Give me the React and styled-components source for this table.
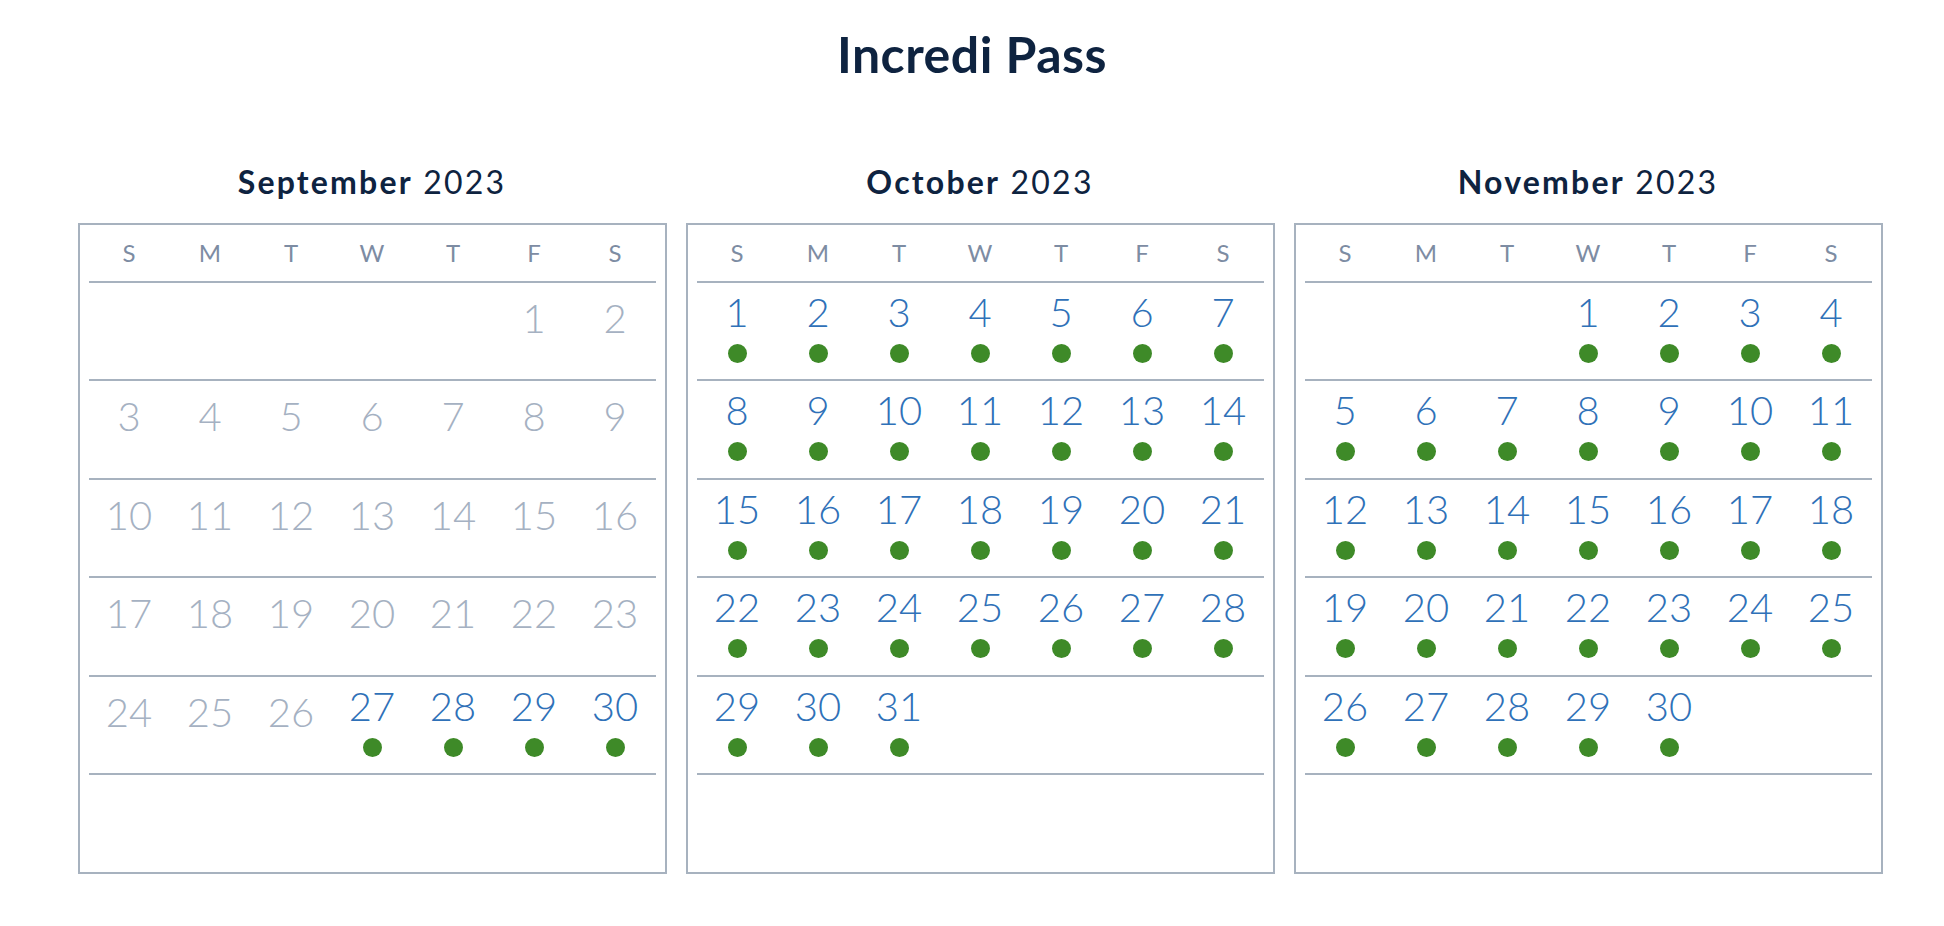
import React from "react";
import styled, { createGlobalStyle } from "styled-components";

const GlobalStyle = createGlobalStyle`
  body {
    margin: 0;
    background: #fff;
    font-family: "Lato", "Noto Sans", sans-serif;
  }
`;

const Page = styled.div`
  padding-top: 24px;
`;

const Title = styled.h1`
  margin: 0 0 79px;
  text-align: center;
  font-size: 50px;
  line-height: 60px;
  font-weight: 700;
  letter-spacing: 0.5px;
  color: #0e2340;
`;

const Months = styled.div`
  display: flex;
  justify-content: center;
  gap: 19px;
  padding: 0 61px 0 77px;
`;

const Month = styled.section`
  width: 589px;
`;

const MonthTitle = styled.h2`
  margin: 0 0 22px;
  text-align: center;
  font-size: 32px;
  line-height: 38px;
  font-weight: 400;
  letter-spacing: 2.2px;
  color: #0e2340;

  b {
    font-weight: 700;
  }
`;

const Box = styled.div`
  border: 2px solid #a7b2bf;
  padding: 0 9px 97px;
`;

const Week = styled.div`
  display: grid;
  grid-template-columns: repeat(7, 81px);
  height: ${(p) => (p.$head ? "56px" : "96.4px")};
  border-bottom: 2px solid #a7b2bf;
`;

const DayName = styled.div`
  text-align: center;
  font-size: 24px;
  line-height: 56px;
  color: #7d8ca3;
`;

const Cell = styled.div`
  display: flex;
  flex-direction: column;
  align-items: center;
  padding-top: ${(p) => (p.$open ? "9px" : "15px")};
`;

const Num = styled.span`
  font-size: 40px;
  line-height: 40px;
  font-weight: 300;
  color: ${(p) => (p.$open ? "#2f71b8" : "#a5b1c2")};
`;

const Dot = styled.span`
  width: 19px;
  height: 19px;
  margin-top: 12px;
  border-radius: 50%;
  background: #3e8a28;
`;

const DAYS = ["S", "M", "T", "W", "T", "F", "S"];

const MONTHS = [
  { name: "September", start: 5, days: 30, openFrom: 27 },
  { name: "October", start: 0, days: 31, openFrom: 1 },
  { name: "November", start: 3, days: 30, openFrom: 1 },
];

function weeksOf({ start, days }) {
  const cells = Array(start).fill(null);
  for (let d = 1; d <= days; d++) cells.push(d);
  while (cells.length % 7) cells.push(null);
  const weeks = [];
  for (let i = 0; i < cells.length; i += 7) weeks.push(cells.slice(i, i + 7));
  return weeks;
}

function Calendar({ month }) {
  return (
    <Month>
      <MonthTitle>
        <b>{month.name}</b> 2023
      </MonthTitle>
      <Box>
        <Week $head>
          {DAYS.map((d, i) => (
            <DayName key={i}>{d}</DayName>
          ))}
        </Week>
        {weeksOf(month).map((week, w) => (
          <Week key={w}>
            {week.map((day, i) => {
              const open = day && day >= month.openFrom;
              return (
                <Cell key={i} $open={open}>
                  {day && <Num $open={open}>{day}</Num>}
                  {open && <Dot />}
                </Cell>
              );
            })}
          </Week>
        ))}
      </Box>
    </Month>
  );
}

export default function App() {
  return (
    <Page>
      <GlobalStyle />
      <Title>Incredi Pass</Title>
      <Months>
        {MONTHS.map((m) => (
          <Calendar key={m.name} month={m} />
        ))}
      </Months>
    </Page>
  );
}
